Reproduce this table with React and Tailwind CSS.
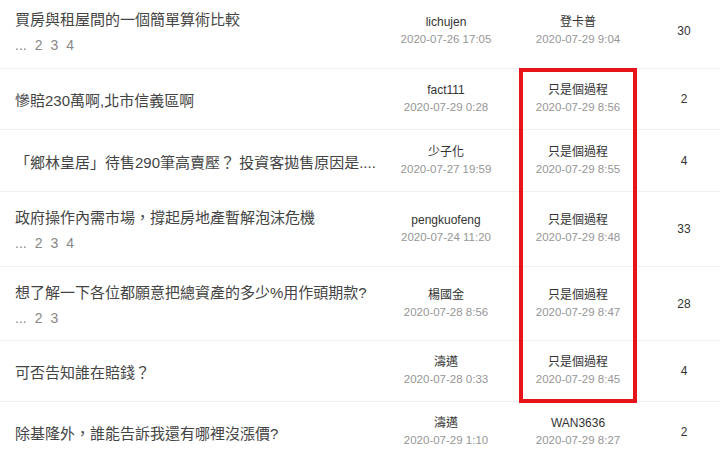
const topics = [
  { title: '買房與租屋間的一個簡單算術比較', pages: ['2', '3', '4'], author: 'lichujen', posted: '2020-07-26 17:05', last: '登卡普', lastAt: '2020-07-29 9:04', replies: 30, h: 'h-[75px]' },
  { title: '慘賠230萬啊,北市信義區啊', author: 'fact111', posted: '2020-07-29 0:28', last: '只是個過程', lastAt: '2020-07-29 8:56', replies: 2, h: 'h-[61px]' },
  { title: '「鄉林皇居」待售290筆高賣壓？ 投資客拋售原因是....', author: '少子化', posted: '2020-07-27 19:59', last: '只是個過程', lastAt: '2020-07-29 8:55', replies: 4, h: 'h-[62px]' },
  { title: '政府操作內需市場，撐起房地產暫解泡沫危機', pages: ['2', '3', '4'], author: 'pengkuofeng', posted: '2020-07-24 11:20', last: '只是個過程', lastAt: '2020-07-29 8:48', replies: 33, h: 'h-[75px]' },
  { title: '想了解一下各位都願意把總資產的多少%用作頭期款?', pages: ['2', '3'], author: '楊國金', posted: '2020-07-28 8:56', last: '只是個過程', lastAt: '2020-07-29 8:47', replies: 28, h: 'h-[74px]' },
  { title: '可否告知誰在賠錢？', author: '濤邁', posted: '2020-07-28 0:33', last: '只是個過程', lastAt: '2020-07-29 8:45', replies: 4, h: 'h-[61px]' },
  { title: '除基隆外，誰能告訴我還有哪裡沒漲價?', author: '濤邁', posted: '2020-07-29 1:10', last: 'WAN3636', lastAt: '2020-07-29 8:27', replies: 2, h: 'h-[61px]' },
]

function Meta({ name, at }) {
  return (
    <div className="flex flex-col items-center justify-center">
      <span className="text-[12px] leading-[17px] text-[#333]">{name}</span>
      <span className="text-[11.5px] leading-[17px] text-[#969696]">{at}</span>
    </div>
  )
}

function TopicRow({ t }) {
  return (
    <div className={`grid grid-cols-[384px_124px_140px_72px] border-b border-[#efefef] ${t.h}`}>
      <div className={`flex flex-col pl-[15px] ${t.pages ? 'pt-[14px]' : 'justify-center pt-[4px]'}`}>
        <span className="text-[15px] leading-[24px] text-[#444] whitespace-nowrap">{t.title}</span>
        {t.pages && (
          <div className="mt-[2px] flex gap-2 text-[14px] leading-[22px] text-[#888]">
            <span>...</span>
            {t.pages.map(p => <span key={p}>{p}</span>)}
          </div>
        )}
      </div>
      <Meta name={t.author} at={t.posted} />
      <Meta name={t.last} at={t.lastAt} />
      <div className="flex items-center justify-center text-[12px] text-[#333]">{t.replies}</div>
    </div>
  )
}

export default function App() {
  return (
    <div
      className="relative h-[457px] w-[720px] overflow-hidden bg-white"
      style={{ fontFamily: '"Liberation Sans", "Noto Sans CJK TC", sans-serif' }}
    >
      <div className="mt-[-6px]">
        {topics.map((t, i) => <TopicRow key={i} t={t} />)}
      </div>
      <div className="pointer-events-none absolute left-[519px] top-[68px] h-[335px] w-[118px] border-[4px] border-[#e8141c]" />
    </div>
  )
}
